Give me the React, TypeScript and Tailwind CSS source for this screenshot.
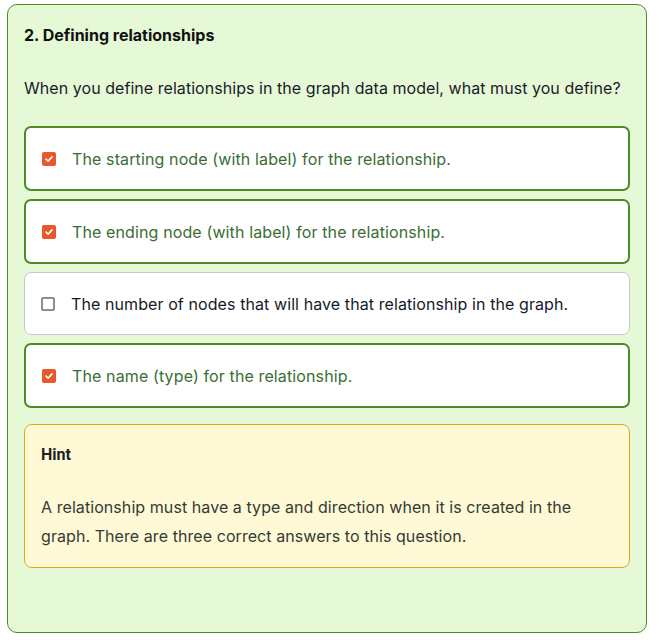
type Opt = { text: string; checked: boolean };

const options: Opt[] = [
  { text: "The starting node (with label) for the relationship.", checked: true },
  { text: "The ending node (with label) for the relationship.", checked: true },
  { text: "The number of nodes that will have that relationship in the graph.", checked: false },
  { text: "The name (type) for the relationship.", checked: true },
];

function CheckBox({ checked }: { checked: boolean }) {
  if (checked) {
    return (
      <span className="flex h-[14px] w-[14px] shrink-0 items-center justify-center rounded-[2px] bg-[#e9572b]">
        <svg width="10" height="10" viewBox="0 0 10 10" fill="none">
          <path d="M2 5.2 L4.1 7.2 L8 2.9" stroke="white" strokeWidth="1.7" strokeLinecap="round" strokeLinejoin="round" />
        </svg>
      </span>
    );
  }
  return <span className="block h-[14px] w-[14px] shrink-0 rounded-[2px] border-2 border-[#8b8b99] bg-white" />;
}

export default function App() {
  return (
    <div className="bg-white pl-[7px] pr-[12px] pt-[4px] pb-[7px]" style={{ fontFamily: "Inter, 'Noto Sans', sans-serif" }}>
      <div className="rounded-[10px] border border-[#4f8a24] bg-[#e6f9d6] px-4 pt-[18px] pb-[64px]">
        <h3 className="text-[16px] font-bold leading-6 text-[#111]">2. Defining relationships</h3>
        <p className="mt-[29px] text-[16px] leading-6 tracking-[0.05px] text-[#1a1a2a]">
          When you define relationships in the graph data model, what must you define?
        </p>
        <div className="mt-[26px] flex flex-col gap-[8px]">
          {options.map((o) => (
            <div
              key={o.text}
              className={
                o.checked
                  ? "flex h-[65px] items-center gap-4 rounded-[7px] border-2 border-[#4f8a24] bg-white pl-4 pr-4"
                  : "flex h-[63px] items-center gap-4 rounded-[7px] border border-[#c6c9cc] bg-white pl-4 pr-4"
              }
            >
              <CheckBox checked={o.checked} />
              <span
                className={
                  o.checked
                    ? "text-[16px] leading-6 tracking-[0.12px] text-[#3b6d33]"
                    : "text-[16px] leading-6 tracking-[0.09px] text-[#141a2c]"
                }
              >
                {o.text}
              </span>
            </div>
          ))}
        </div>
        <div className="mt-4 rounded-[8px] border border-[#d8ae0e] bg-[#fff9d6] px-4 pt-[18px] pb-[16px]">
          <div className="text-[16px] font-bold leading-6 text-[#222]" style={{ fontFamily: "Roboto, sans-serif" }}>
            Hint
          </div>
          <p className="mt-[26px] text-[16px] leading-[29px] tracking-[0.07px] text-[#333b35]">
            A relationship must have a type and direction when it is created in the graph. There are three correct answers to this question.
          </p>
        </div>
      </div>
    </div>
  );
}
